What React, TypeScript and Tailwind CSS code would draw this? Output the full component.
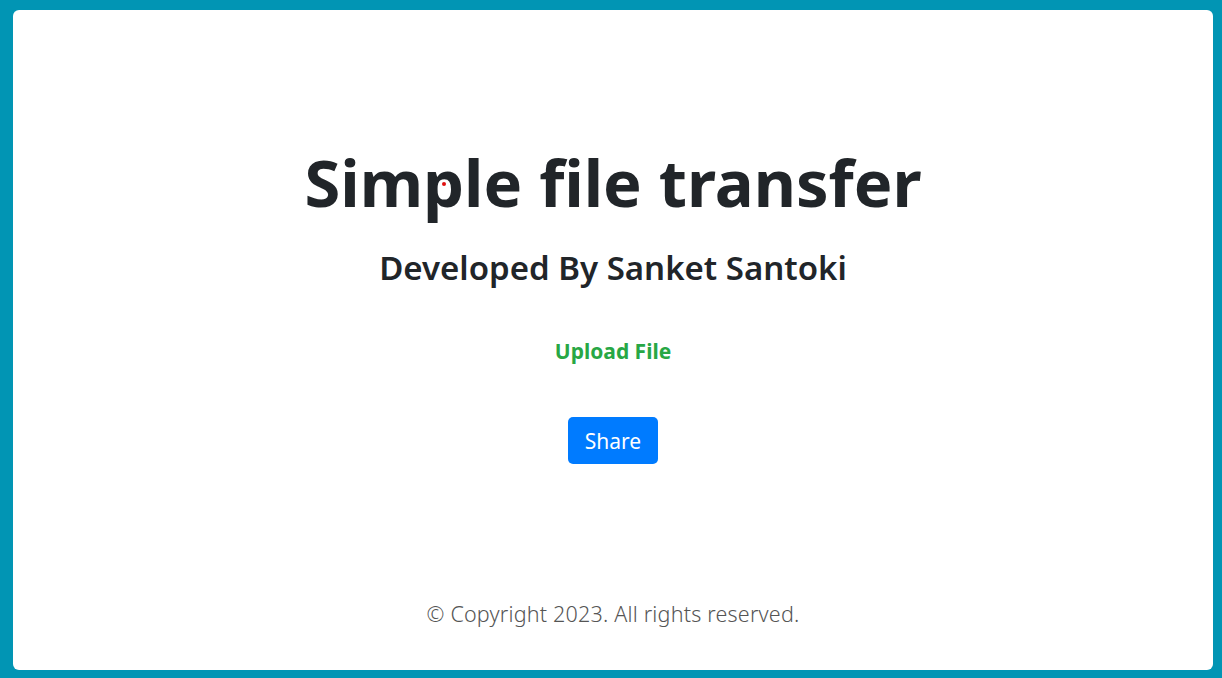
import React from "react";

export default function App() {
  return (
    <div className="w-[1222px] h-[678px] bg-[#0195b4] pt-[10px] pb-[8px] pl-[13px] pr-[9px] flex" style={{ fontFamily: '"Noto Sans", "Open Sans", sans-serif' }}>
      <div className="relative flex-1 bg-white rounded-[6px] flex flex-col items-center">
        <h1 className="mt-[133px] text-[65px] leading-[78px] font-bold text-[#212529]">Simple file transfer</h1>
        <h2 className="mt-[27px] text-[33px] leading-[40px] font-semibold text-[#212529]">Developed By Sanket Santoki</h2>
        <div className="mt-[50px] text-[21px] leading-[26px] font-bold text-[#28a745]">Upload File</div>
        <button className="mt-[53px] w-[90px] h-[47px] rounded-[5px] bg-[#007bff] text-white text-[21px] leading-[28px] flex items-center justify-center">Share</button>
        <div className="mt-auto mb-[42px] text-[21.5px] leading-[28px] font-light text-[#555555] tracking-[0.2px]">© Copyright 2023. All rights reserved.</div>
        <div className="absolute left-[429px] top-[172px] w-[4px] h-[4px] rounded-full bg-[#e01010]" />
      </div>
    </div>
  );
}
